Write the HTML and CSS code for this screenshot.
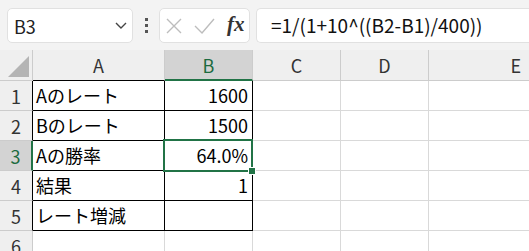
FILE: index.html
```html
<!DOCTYPE html>
<html lang="ja">

<head>
    <meta charset="UTF-8">
    <title>Sheet1</title>
    <link rel="stylesheet" href="styles.css">
</head>

<body>
    <div class="toolbar">
        <div class="namebox">
            <span class="cellref">B3</span>
            <svg class="chevron" width="12" height="7" viewBox="0 0 12 7">
                <path d="M1 1 L6 6 L11 1" fill="none" stroke="#444" stroke-width="1.4"/>
            </svg>
        </div>
        <div class="dots">
            <span></span><span></span><span></span>
        </div>
        <div class="fxbox">
            <svg class="cancel" width="16" height="16" viewBox="0 0 16 16">
                <path d="M1 1 L15 15 M15 1 L1 15" stroke="#bdbdbd" stroke-width="1.4"/>
            </svg>
            <svg class="enter" width="21" height="16" viewBox="0 0 21 16">
                <path d="M1 8 L8 15 L20 1" fill="none" stroke="#bdbdbd" stroke-width="1.4"/>
            </svg>
            <span class="fx">fx</span>
        </div>
        <div class="formula">=1/(1+10^((B2-B1)/400))</div>
    </div>

    <div class="sheet">
        <div class="corner"><span class="tri"></span></div>
        <div class="colhead black-bottom">A</div>
        <div class="colhead selected">B</div>
        <div class="colhead">C</div>
        <div class="colhead">D</div>
        <div class="colhead">E</div>

        <div class="rowhead black-right">1</div>
        <div class="cell boxed">Aのレート</div>
        <div class="cell boxed num">1600</div>
        <div class="cell"></div>
        <div class="cell"></div>
        <div class="cell"></div>

        <div class="rowhead black-right">2</div>
        <div class="cell boxed">Bのレート</div>
        <div class="cell boxed num">1500</div>
        <div class="cell"></div>
        <div class="cell"></div>
        <div class="cell"></div>

        <div class="rowhead selected-row">3</div>
        <div class="cell boxed">Aの勝率</div>
        <div class="cell boxed num">64.0%</div>
        <div class="cell"></div>
        <div class="cell"></div>
        <div class="cell"></div>

        <div class="rowhead black-right">4</div>
        <div class="cell boxed">結果</div>
        <div class="cell boxed num">1</div>
        <div class="cell"></div>
        <div class="cell"></div>
        <div class="cell"></div>

        <div class="rowhead black-right">5</div>
        <div class="cell boxed">レート増減</div>
        <div class="cell boxed num"></div>
        <div class="cell"></div>
        <div class="cell"></div>
        <div class="cell"></div>

        <div class="rowhead">6</div>
        <div class="cell"></div>
        <div class="cell"></div>
        <div class="cell"></div>
        <div class="cell"></div>
        <div class="cell"></div>

        <div class="selection"><span class="handle"></span></div>
    </div>
</body>

</html>
```

FILE: styles.css
```css
body {
    margin: 0;
    font-family: "Noto Sans CJK JP", "Noto Sans", sans-serif;
    color: #000;
    background: #fff;
    overflow: hidden;
}

/* formula bar */
.toolbar {
    height: 50px;
    background: #f3f3f3;
    display: flex;
    align-items: flex-start;
    padding-top: 8px;
    box-sizing: border-box;
}

.namebox {
    margin-left: 7px;
    width: 126px;
    height: 35px;
    background: #fff;
    border: 1px solid #e1e1e1;
    border-radius: 5px;
    box-sizing: border-box;
    display: flex;
    align-items: center;
    padding: 0 5px 0 6px;
}

.cellref {
    font-size: 18px;
    color: #222;
}

.chevron {
    margin-left: auto;
}

.dots {
    width: 26px;
    height: 35px;
    display: flex;
    flex-direction: column;
    align-items: center;
    justify-content: center;
    gap: 3px;
}

.dots span {
    width: 3px;
    height: 3px;
    background: #555;
}

.fxbox {
    width: 91px;
    height: 35px;
    background: #fff;
    border: 1px solid #e1e1e1;
    border-radius: 5px;
    box-sizing: border-box;
    display: flex;
    align-items: center;
    padding-left: 6px;
}

.cancel {
    margin-right: 12px;
}

.enter {
    margin-right: 12px;
}

.fx {
    font-family: "Liberation Serif", serif;
    font-style: italic;
    font-weight: bold;
    font-size: 21px;
    color: #333;
    margin-top: -3px;
}

.formula {
    flex: 1;
    margin-left: 6px;
    height: 35px;
    background: #fff;
    border: 1px solid #e1e1e1;
    border-right: none;
    border-radius: 5px 0 0 5px;
    box-sizing: border-box;
    font-size: 19px;
    line-height: 31px;
    padding-left: 14px;
    color: #111;
    white-space: nowrap;
}

/* grid */
.sheet {
    position: relative;
    display: grid;
    grid-template-columns: 33px 132px 88px 88px 88px 100px;
    grid-template-rows: 31px repeat(6, 30px);
    font-size: 18px;
}

.corner,
.colhead,
.rowhead {
    background: #efefef;
    color: #333;
    border-right: 1px solid #cccccc;
    border-bottom: 1px solid #cccccc;
    box-sizing: border-box;
    display: flex;
    align-items: center;
    justify-content: center;
}

.colhead.last {
    justify-content: flex-end;
}

.corner {
    position: relative;
}

.tri {
    position: absolute;
    left: 8px;
    top: 6px;
    width: 0;
    height: 0;
    border-left: 21px solid transparent;
    border-bottom: 21px solid #b4b4b4;
}

.colhead.selected {
    background: #d3d3d3;
    color: #1d6b3f;
    border-bottom: 2px solid #217346;
}

.colhead.black-bottom {
    border-bottom-color: #000;
}

.colhead:nth-child(6) {
    justify-content: flex-end;
    padding-right: 8px;
    border-right: none;
}

.rowhead.black-right {
    border-right-color: #000;
}

.rowhead.selected-row {
    background: #d3d3d3;
    color: #1d6b3f;
    border-right: 2px solid #217346;
}

.cell {
    border-right: 1px solid #d9d9d9;
    border-bottom: 1px solid #d9d9d9;
    box-sizing: border-box;
    display: flex;
    align-items: flex-end;
    padding: 0 4px 2px 3px;
    white-space: nowrap;
}

.cell:nth-child(6n) {
    border-right: none;
}

.cell.boxed {
    border-right-color: #000;
    border-bottom-color: #000;
}

.cell.num {
    justify-content: flex-end;
}

.selection {
    position: absolute;
    left: 163px;
    top: 89px;
    width: 90px;
    height: 33px;
    border: 2px solid #217346;
    box-sizing: border-box;
}

.handle {
    position: absolute;
    right: -5px;
    bottom: -5px;
    width: 6px;
    height: 6px;
    background: #217346;
    border: 1px solid #fff;
}
```
